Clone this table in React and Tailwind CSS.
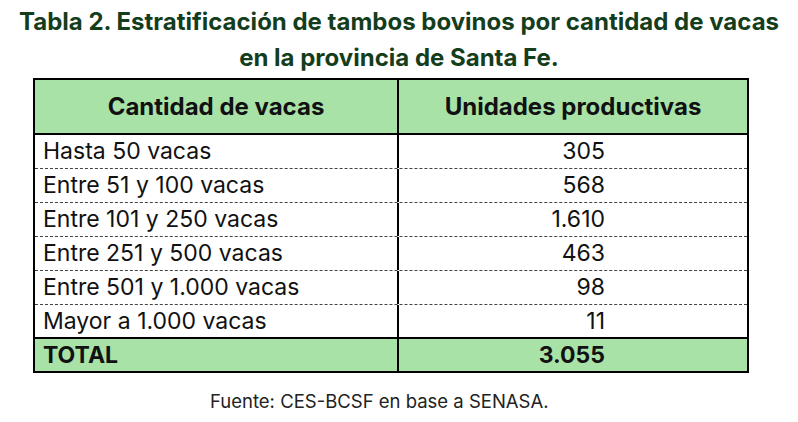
import React from "react";

const rows = [
  ["Hasta 50 vacas", "305"],
  ["Entre 51 y 100 vacas", "568"],
  ["Entre 101 y 250 vacas", "1.610"],
  ["Entre 251 y 500 vacas", "463"],
  ["Entre 501 y 1.000 vacas", "98"],
  ["Mayor a 1.000 vacas", "11"],
];

const App = () => {
  return (
    <div className="w-[798px] h-[422px] bg-white font-['Inter','Liberation_Sans',sans-serif] text-[#111]">
      <div className="pt-[4px] text-center text-[24px] leading-[36px] font-bold text-[#143d1c]">
        <div>Tabla 2. Estratificación de tambos bovinos por cantidad de vacas</div>
        <div>en la provincia de Santa Fe.</div>
      </div>
      <div className="ml-[33px] mt-[2px] w-[716px] border-2 border-black">
        <div className="flex h-[55px] bg-[#a8e2a7] border-b-2 border-black text-[24px] font-bold">
          <div className="w-[364px] flex items-center justify-center border-r-2 border-black">Cantidad de vacas</div>
          <div className="flex-1 flex items-center justify-center">Unidades productivas</div>
        </div>
        {rows.map(([label, value], i) => (
          <div
            key={label}
            className={`flex h-[34px] text-[23px] ${i < rows.length - 1 ? "border-b border-dashed border-[#444]" : "border-b-2 border-black"}`}
          >
            <div className="w-[364px] flex items-center pl-[8px] border-r-2 border-black">{label}</div>
            <div className="flex-1 flex items-center justify-end pr-[142px]">{value}</div>
          </div>
        ))}
        <div className="flex h-[32px] bg-[#a8e2a7] text-[23px] font-bold">
          <div className="w-[364px] flex items-center pl-[8px] border-r-2 border-black">TOTAL</div>
          <div className="flex-1 flex items-center justify-end pr-[142px]">3.055</div>
        </div>
      </div>
      <div className="mt-[14px] pl-[210px] text-[18.5px] leading-[28px] text-[#222]">Fuente: CES-BCSF en base a SENASA.</div>
    </div>
  );
};

export default App;
